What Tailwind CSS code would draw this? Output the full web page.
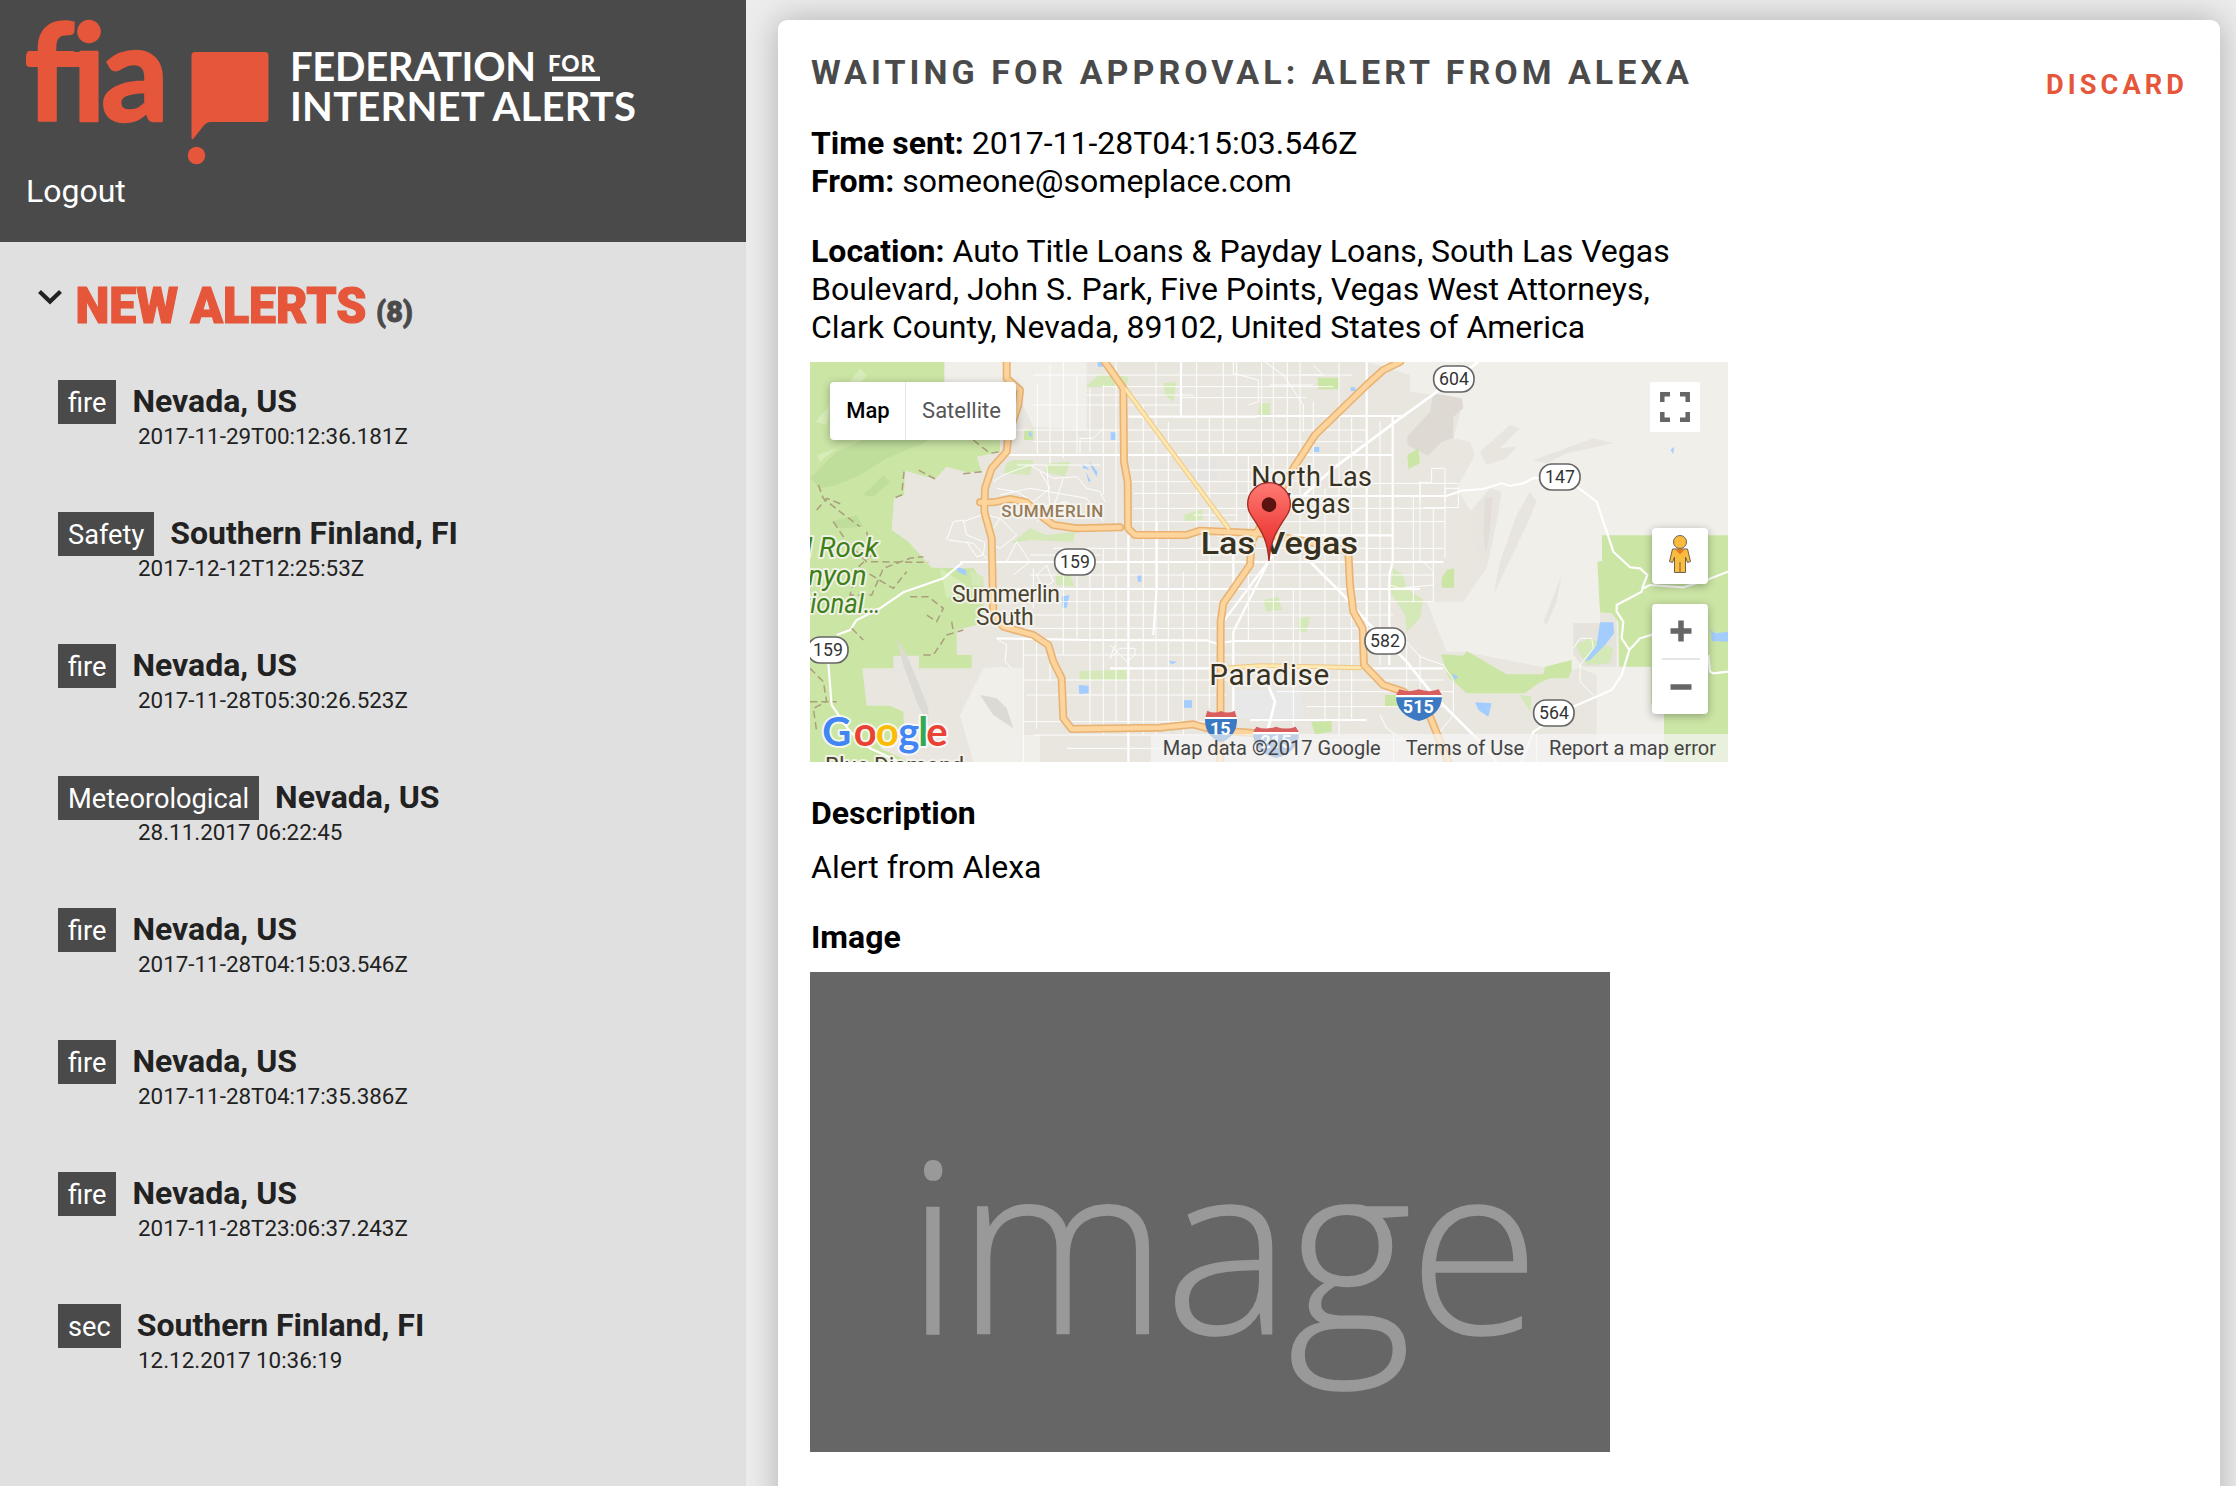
<!DOCTYPE html>
<html lang="en">
<head>
<meta charset="utf-8">
<title>Federation for Internet Alerts</title>
<script src="https://cdn.jsdelivr.net/npm/@tailwindcss/browser@4"></script>
</head>
<body class="flex h-[1486px] w-[2236px] overflow-hidden bg-[#ececec] font-[Roboto,sans-serif]">

<aside class="flex w-[746px] shrink-0 flex-col bg-[#e0e0e0] text-[#222]">
  <header class="h-[242px] bg-[#4a4a4a] text-white">
    <svg class="block h-[172px] w-[660px]" viewBox="0 0 660 172">
      <g fill="#e5563a">
        <text y="120.500" font-family="Lato" font-weight="700" font-size="134" stroke="#e5563a" stroke-width="2.500" stroke-linejoin="round"><tspan x="26">f</tspan><tspan x="72">i</tspan><tspan x="101" textLength="68" lengthAdjust="spacingAndGlyphs">a</tspan></text>
        <rect x="26" y="52" width="71" height="15" rx="4"/>
        <path d="M195 52H265Q268.500 52 268.500 55.500V118.500Q268.500 122 265 122H211Q206.500 122 203.500 126L193.500 138.500Q191.500 140 191.500 137.500V55.500Q191.500 52 195 52Z"/>
        <circle cx="196.500" cy="155.500" r="8.700"/>
      </g>
      <g fill="#fff" font-family="Lato" font-weight="700">
        <text x="290" y="80.500" font-size="40" textLength="246">FEDERATION</text>
        <text x="548" y="71.500" font-size="22.500" font-weight="900" textLength="47">FOR</text>
        <rect x="552" y="76.500" width="48" height="4.500"/>
        <text x="290" y="121" font-size="40" textLength="346">INTERNET ALERTS</text>
      </g>
    </svg>
    <a class="ml-[26px] block text-[32px] leading-[38px]">Logout</a>
  </header>

  <div class="flex h-[138px] pt-[36px] pl-[36px]">
    <svg class="h-[60px] w-[400px]" viewBox="36 278 400 60">
      <path d="M39.500 291.500L50 301.500L60.500 291.500" fill="none" stroke="#222" stroke-width="4.200"/>
      <text x="75.500" y="322.500" font-size="50.500" font-weight="900" fill="#e5563a" stroke="#e5563a" stroke-width="1.200" textLength="291" lengthAdjust="spacingAndGlyphs">NEW ALERTS</text>
      <text x="376" y="321.500" font-size="29" font-weight="900" fill="#4a4a4a" stroke="#4a4a4a" stroke-width=".8" textLength="37" lengthAdjust="spacingAndGlyphs">(8)</text>
    </svg>
  </div>

  <ul class="pl-[58px]">
    <li class="h-[132px]"><div class="flex h-[44px] items-start gap-4"><span class="h-[44px] bg-[#4a4a4a] px-[10px] text-[27.2px] leading-[46px] text-white">fire</span><b class="text-[32px] leading-[43px]">Nevada, US</b></div><div class="pl-[80px] text-[22.4px] leading-[25px]">2017-11-29T00:12:36.181Z</div></li>
    <li class="h-[132px]"><div class="flex h-[44px] items-start gap-4"><span class="h-[44px] bg-[#4a4a4a] px-[10px] text-[27.2px] leading-[46px] text-white">Safety</span><b class="text-[32px] leading-[43px]">Southern Finland, FI</b></div><div class="pl-[80px] text-[22.4px] leading-[25px]">2017-12-12T12:25:53Z</div></li>
    <li class="h-[132px]"><div class="flex h-[44px] items-start gap-4"><span class="h-[44px] bg-[#4a4a4a] px-[10px] text-[27.2px] leading-[46px] text-white">fire</span><b class="text-[32px] leading-[43px]">Nevada, US</b></div><div class="pl-[80px] text-[22.4px] leading-[25px]">2017-11-28T05:30:26.523Z</div></li>
    <li class="h-[132px]"><div class="flex h-[44px] items-start gap-4"><span class="h-[44px] bg-[#4a4a4a] px-[10px] text-[27.2px] leading-[46px] text-white">Meteorological</span><b class="text-[32px] leading-[43px]">Nevada, US</b></div><div class="pl-[80px] text-[22.4px] leading-[25px]">28.11.2017 06:22:45</div></li>
    <li class="h-[132px]"><div class="flex h-[44px] items-start gap-4"><span class="h-[44px] bg-[#4a4a4a] px-[10px] text-[27.2px] leading-[46px] text-white">fire</span><b class="text-[32px] leading-[43px]">Nevada, US</b></div><div class="pl-[80px] text-[22.4px] leading-[25px]">2017-11-28T04:15:03.546Z</div></li>
    <li class="h-[132px]"><div class="flex h-[44px] items-start gap-4"><span class="h-[44px] bg-[#4a4a4a] px-[10px] text-[27.2px] leading-[46px] text-white">fire</span><b class="text-[32px] leading-[43px]">Nevada, US</b></div><div class="pl-[80px] text-[22.4px] leading-[25px]">2017-11-28T04:17:35.386Z</div></li>
    <li class="h-[132px]"><div class="flex h-[44px] items-start gap-4"><span class="h-[44px] bg-[#4a4a4a] px-[10px] text-[27.2px] leading-[46px] text-white">fire</span><b class="text-[32px] leading-[43px]">Nevada, US</b></div><div class="pl-[80px] text-[22.4px] leading-[25px]">2017-11-28T23:06:37.243Z</div></li>
    <li class="h-[132px]"><div class="flex h-[44px] items-start gap-4"><span class="h-[44px] bg-[#4a4a4a] px-[10px] text-[27.2px] leading-[46px] text-white">sec</span><b class="text-[32px] leading-[43px]">Southern Finland, FI</b></div><div class="pl-[80px] text-[22.4px] leading-[25px]">12.12.2017 10:36:19</div></li>
  </ul>
</aside>

<main class="mt-5 mr-4 ml-8 h-[1500px] grow rounded-[9px] bg-white px-8 pt-8 text-[32px] leading-[38px] text-black shadow-[0_0_32px_rgba(0,0,0,0.26)]">
  <div class="flex h-[72px] justify-between pl-px">
    <h1 class="text-[34px] leading-10 font-bold tracking-[4.03px] text-[#4a4a4a]">WAITING FOR APPROVAL: ALERT FROM ALEXA</h1>
    <button class="mt-4 h-[34px] text-[27.2px] leading-[34px] font-bold tracking-[4.08px] text-[#e5563a]">DISCARD</button>
  </div>
  <div class="pl-px"><b>Time sent:</b> 2017-11-28T04:15:03.546Z</div>
  <div class="pl-px"><b>From:</b> someone@someplace.com</div>
  <div class="mt-8 w-[880px] pl-px"><b>Location:</b> Auto Title Loans &amp; Payday Loans, South Las Vegas Boulevard, John S. Park, Five Points, Vegas West Attorneys, Clark County, Nevada, 89102, United States of America</div>

  <div class="relative mt-4 h-[400px] w-[918px] overflow-hidden bg-[#e9e6e0]">
    <svg class="block h-[400px] w-[918px]" viewBox="30 21 2754 1200">
      <!-- terrain -->
      <path fill="#f0efea" d="M435 21H860V225L700 215L640 90L435 85ZM480 1080L550 940L600 935L668 940V1140H720V1221H520Z"/>
      <path fill="#f0efea" d="M1700 21H2784V1221H2390V960L2320 930V805H2450V780L2400 640V500L2400 920L2300 950L1990 890L1940 890L1880 740L1990 740L2060 640L2020 480L1970 400L2025 300L2010 260L1960 250L1990 140L1900 120L1830 110V60Z"/>
      <path fill="#ded9d2" d="M1900 115L1985 130L1990 160L1960 185V250L1925 260L1885 302L1822 270V245L1890 170Z"/>
      <path fill="#e8e5df" d="M2040 290L2130 210L2160 220L2100 280L2150 275L2120 310L2060 330ZM2200 315L2380 250L2440 265L2300 295L2240 325ZM2010 470L2070 400L2105 410L2090 500L2060 640L2030 600ZM2150 480L2190 410L2210 440L2180 510L2080 720L2100 620ZM2230 800L2285 660L2270 740L2240 810Z"/>
      <path fill="#e3ddd8" d="M2055 430L2078 425L2070 520L2058 600L2050 540Z"/>
      <path fill="#e6e2dc" d="M2320 805H2450V935H2350L2320 900Z"/>
      <path fill="#e5e4e2" d="M1150 310H1250V375H1180Z"/>
      <!-- parks -->
      <path fill="#cbe5a5" d="M30 21H432V85H600V290L530 305L545 350L500 352L440 335L405 372L315 347L312 420L282 430L275 525L325 560L395 638L520 640L550 680V770L530 810L470 825V900H515V940H357V902H280V940H187L200 1052H270L310 1070L312 1110L240 1180L330 1221H30Z"/>
      <path fill="#bfdd9b" d="M30 370L110 290L200 250L330 190L400 200L380 260L260 310L180 360L110 390L60 400ZM190 420L250 360L270 380L220 425ZM90 500L170 480L190 515L120 520Z"/>
      <path fill="#d7ecb9" d="M120 120L180 40L200 60L150 130ZM110 280L60 320L50 300ZM420 640L500 690L440 730ZM45 200L90 150L80 210Z"/>
      <path fill="#dcdad5" d="M290 850L320 900L345 960L385 1060V1110L350 1040L310 930ZM540 1020L590 1030L620 1060L640 1120L580 1080Z"/>
      <path fill="#cbe5a5" d="M2406 541H2784V1221H2592V1060L2553 1045V935H2457L2455 800L2435 775L2400 772L2392 620L2406 618ZM1923 898L1990 902L2000 888L2120 958H2230L2235 935L2315 915V945L2305 970H2250L2215 985L2175 1015H2000L1945 965ZM1925 670L1940 645L1962 640V698H1925ZM1755 1020H1795V1055H1755ZM1533 1100L1595 1098V1130L1545 1138ZM1553 68H1615V103H1555ZM1822 300L1855 280L1860 325L1825 342ZM672 228L700 220V255H672Z"/>
      <path fill="#d4e8b8" d="M860 92L900 58L985 65L980 92L860 97ZM1090 85L1130 80L1120 140L1095 120ZM1152 480L1208 462V495L1155 500ZM640 315H700L690 360L610 355L620 325ZM740 325L810 320L795 365L735 350ZM690 520L740 540L825 530L820 560L690 555L635 565L670 535ZM838 948L980 945V975H838ZM510 645L550 665V695L515 690ZM765 660L800 640L825 695L770 690ZM1390 735L1435 725L1445 765L1400 770ZM1495 790L1530 785L1520 830H1495ZM1780 640L1810 660L1820 700L1870 735L1860 790L1820 830L1815 780L1770 710ZM2325 870L2370 850L2440 880L2430 925L2360 930ZM1380 145H1410V180H1375ZM2160 1020L2195 1025L2190 1070Z"/>
      <path fill="#e8e8e8" d="M1300 1005H1500L1515 1085L1470 1090H1300Z"/>
      <!-- water -->
      <path fill="#a3ccff" d="M685 240L690 225L698 245ZM932 232H948V255H932ZM845 325L870 345L850 340ZM868 320L892 350L890 365L875 340ZM858 350L872 378L865 380ZM470 635L498 645L500 662L473 650ZM785 725L808 720L800 758H788ZM836 990L866 992V1015L838 1017ZM1150 1036H1176V1058H1152ZM1106 918L1132 920L1115 928ZM1012 662L1024 658V680H1014ZM1540 276H1558V291H1540ZM1652 97H1666V108H1652ZM893 21H910V35H893ZM2400 802H2440L2442 835L2415 870L2370 915L2355 918L2390 870ZM2733 825L2745 835L2784 830V860L2735 858ZM2025 1042L2075 1045L2065 1085L2035 1065ZM1955 955L1975 965L1965 975ZM2612 285L2622 275L2620 298Z"/>
      <!-- street grid -->
      <g fill="none" stroke="#fff" stroke-width="2.800">
        <path d="M700 60H1655M910 95H1600M860 120H1180M1410 90H1540M700 150H1143M1143 128H1520M640 225H1700M700 260H1690M650 330H900M985 345H1480M985 380H1450M1000 415H1400M1450 378H1560M1640 385H1975M1000 460H1935M985 500H1935M1180 480H1310M760 580H1930M690 600H900M690 660H1900M640 740H1900M680 780H1780M670 820H1750M670 900H1700M670 975H1930M680 1020H1280M1430 1010H1960M670 1100H1250M700 1140H1200M1520 1055H1940M800 1180H1380M1520 1155H1900"/>
        <path d="M712 90V300M750 30V330M790 21V310M831 60V300M870 100V290M910 90V420M948 21V620M1030 150V1140M1068 21V1140M1105 200V1130M1190 21V1110M1228 180V1060M1270 21V300M1310 21V500M1345 300V860M1385 21V540M1420 21V940M1462 21V460M1500 21V950M1540 140V450M1575 400V1100M1617 21V1150M1655 180V1100M1740 200V930M1840 420V740M1900 460V740M1860 380V620M1935 400V610M670 850V1221M710 860V1120M750 900V980M790 580V900M831 600V860M870 600V1120M910 580V1140M948 660V1100M700 640V760M1150 650V1140M1820 840V1000M1860 900V1100M1480 700V1200"/>
        <path d="M1300 21V55L1375 75V140L1345 150M1395 21L1450 60L1510 150V230M1540 30L1570 60H1500M910 220L880 250H840V295M580 380L610 360L690 330L760 370L830 365L860 400L900 410L915 440M590 400L650 410L700 440L750 400L720 350M740 330L750 460M790 370L760 460L710 500M600 420L690 400L860 430L910 500M700 460L800 440L850 480M560 480L600 490L650 540L600 580L560 560M600 490L580 520M620 620L650 560L690 620L640 660M440 555L460 500L490 495L500 540L550 560M490 500L545 480M445 555L520 565L560 610M500 560L530 605L550 600L555 560M740 630L710 660L730 700L760 680ZM590 850L620 870L615 920L635 940M930 870L980 920L1005 900V880L960 880L930 910L945 870M1870 620L1900 650V690L1800 700L1770 690M1820 860L1860 905L1930 930L1960 975V1080L1920 1130M1740 1080L1760 1120L1820 1160"/>
        <path d="M1895 382V340H1935V440M1895 382H1860V440M1870 458H1975V400H1935M2320 880L2340 850L2375 850L2380 880L2340 930L2340 980L2380 1020"/>
      </g>
      <g fill="none" stroke="#fff" stroke-width="6.500">
        <path d="M985 185H1370M1370 183H1815M620 300H1780M1470 423H1940L1985 407L2050 402L2105 385L2130 393L2170 385L2200 370L2260 365M480 621H1930M650 702H1860M590 850L860 855L1220 856L1250 866L1300 858H1690M930 940H1930M1250 541H1380H1780M985 540V1221M1143 21V185M1700 21V900M1778 185V620L1768 660V930M1300 1090V830L1435 560M1070 500V700L1060 840M1300 540V700M1270 800L1420 600M1350 1095H1700"/>
        <path stroke-width="8" d="M2035 21L1800 190L1600 340L1490 440M1520 610L1630 720L1700 800L1820 920L1900 1020L1990 1110L2050 1170L2090 1221M1400 980L1425 1040L1410 1100L1380 1200"/>
        <path d="M2330 395L2390 440L2420 530L2440 590L2490 637L2520 640L2542 660L2530 690L2525 710L2450 750V770L2470 800L2465 850L2488 885L2465 960L2435 1005L2320 1055L2200 1130L2165 1221M2530 700L2550 690L2650 697L2720 675L2784 650M2488 885L2520 850L2560 838M2725 900L2730 950L2740 955L2784 950M490 621L430 670L310 712L240 760L170 795L150 825L110 840M85 925L95 1050L150 1130L210 1180L300 1221"/>
      </g>
      <!-- trails -->
      <path fill="none" stroke="#ab9f7d" stroke-width="4.500" stroke-dasharray="22 12" d="M520 255L570 295L600 290M545 350L480 357M405 372L350 342M312 350L305 420L280 430M55 390L70 430L120 470L180 515M50 465L80 430L130 450M100 500L140 560L200 620L385 622M200 530L215 600L170 640L150 720L215 720L250 640L330 610L370 605M180 640L280 700L320 650M330 725L385 725L430 760L410 800L380 780M155 820L190 855M370 900L400 900L440 840L490 825M30 940L70 980L80 1040L40 1060L50 1130M30 1040H110M455 800L460 830"/>
      <!-- highways -->
      <g fill="none" stroke-linejoin="round" stroke-linecap="round">
        <g stroke="#e8b273">
          <path stroke-width="15" stroke="#ecc987" d="M975 100L1285 520M1270 940L1380 932L1680 938"/>
          <path stroke-width="24" d="M540 442H580L630 432L680 442L720 480L760 510L830 520L960 517M620 21V70L660 105L655 150L625 240L620 290L575 340L555 400L553 470L575 550L580 780L610 815L700 840L745 870L760 920L785 970L790 1090L815 1122L1080 1118L1180 1108L1240 1125L1370 1135M915 21L970 100L972 320L983 380L984 520L1005 540L1160 540L1200 527L1380 535L1470 550L1600 575L1645 590L1650 690L1660 770L1688 820L1692 930L1750 990L1810 1010L1880 1060L1945 1221M1800 21L1750 45L1700 90L1545 240L1480 340L1430 430L1355 560L1350 630L1270 745L1262 800L1261 1221"/>
        </g>
        <g stroke="#fdd49b">
          <path stroke-width="9" stroke="#ffe7b0" d="M975 100L1285 520M1270 940L1380 932L1680 938"/>
          <path stroke-width="14.500" d="M540 442H580L630 432L680 442L720 480L760 510L830 520L960 517M620 21V70L660 105L655 150L625 240L620 290L575 340L555 400L553 470L575 550L580 780L610 815L700 840L745 870L760 920L785 970L790 1090L815 1122L1080 1118L1180 1108L1240 1125L1370 1135M915 21L970 100L972 320L983 380L984 520L1005 540L1160 540L1200 527L1380 535L1470 550L1600 575L1645 590L1650 690L1660 770L1688 820L1692 930L1750 990L1810 1010L1880 1060L1945 1221M1800 21L1750 45L1700 90L1545 240L1480 340L1430 430L1355 560L1350 630L1270 745L1262 800L1261 1221"/>
        </g>
      </g>
      <!-- route shields -->
      <g fill="#fff" stroke="#666" stroke-width="5">
        <rect x="764" y="582" width="121" height="78" rx="37"/>
        <rect x="23" y="846" width="121" height="78" rx="37"/>
        <rect x="1901" y="33" width="121" height="78" rx="37"/>
        <rect x="2219" y="327" width="121" height="78" rx="37"/>
        <rect x="1695" y="819" width="121" height="78" rx="37"/>
        <rect x="2201" y="1035" width="121" height="78" rx="37"/>
      </g>
      <g fill="#333" font-size="53" text-anchor="middle">
        <text x="825" y="640">159</text><text x="84" y="904">159</text><text x="1962" y="91">604</text><text x="2280" y="385">147</text><text x="1755" y="877">582</text><text x="2262" y="1093">564</text>
      </g>
      <g text-anchor="middle" fill="#fff" font-weight="700" font-size="54">
        <path fill="#d95f5f" d="M1222 1067Q1242 1078 1263 1068Q1284 1078 1304 1067L1310 1087H1216Z"/>
        <path fill="#fff" d="M1215 1086H1311V1093H1215Z"/>
        <path fill="#3b7ac2" d="M1215 1092H1311Q1312 1144 1263 1162Q1214 1144 1215 1092Z"/>
        <text x="1261" y="1139">15</text>
        <path fill="#d95f5f" d="M1798 1003Q1826 1014 1857 1003Q1888 1014 1916 1003L1926 1021H1788Z"/>
        <path fill="#fff" d="M1788 1020H1926V1028H1788Z"/>
        <path fill="#3b7ac2" d="M1788 1027H1926Q1922 1082 1857 1098Q1792 1082 1788 1027Z"/>
        <text x="1855" y="1074">515</text>
        <path fill="#d95f5f" d="M1369 1115Q1397 1126 1428 1115Q1459 1126 1487 1115L1497 1132H1359Z"/>
        <path fill="#fff" d="M1359 1131H1497V1139H1359Z"/>
        <path fill="#3b7ac2" d="M1359 1138H1497Q1493 1193 1428 1209Q1363 1193 1359 1138Z"/>
        <text x="1428" y="1180">215</text>
      </g>
      <!-- place names -->
      <g paint-order="stroke" stroke="#f7f5f1" stroke-opacity=".85" stroke-width="12" stroke-linejoin="round" fill="#37321f">
        <text x="604" y="486" font-size="51" font-weight="500" fill="#947b58" textLength="306">SUMMERLIN</text>
        <text x="456" y="740" font-size="69" textLength="324" fill="#4a442f">Summerlin</text>
        <text x="528" y="810" font-size="69" textLength="173" fill="#4a442f">South</text>
        <text x="1354" y="392" font-size="81" textLength="362">North Las</text>
        <text x="1421" y="475" font-size="81" textLength="230">Vegas</text>
        <text x="1202" y="597" font-size="96" font-weight="500" textLength="472" lengthAdjust="spacingAndGlyphs">Las Vegas</text>
        <text x="1228" y="990" font-size="89" textLength="360">Paradise</text>
        <g font-style="italic" fill="#3f7f18" font-size="83">
          <text x="-9" y="605" textLength="244" lengthAdjust="spacingAndGlyphs">d Rock</text><text x="-21" y="690" textLength="221" lengthAdjust="spacingAndGlyphs">anyon</text><text x="6" y="773" textLength="236" lengthAdjust="spacingAndGlyphs">tional…</text>
        </g>
        <text x="75" y="1258" font-size="69" textLength="418" fill="#4a442f">Blue Diamond</text>
      </g>
      <!-- marker -->
      <defs><linearGradient id="pin" x1="0" y1="0" x2="0" y2="1"><stop offset="0" stop-color="#ff7b74"/><stop offset=".6" stop-color="#f0443f"/><stop offset="1" stop-color="#d8322d"/></linearGradient></defs>
      <path fill="url(#pin)" stroke="#a52b27" stroke-width="4" d="M1407 618C1403 560 1388 535 1366 500C1352 480 1343 467 1343 447A64 64 0 0 1 1471 447C1471 467 1462 480 1448 500C1426 535 1411 560 1407 618Z"/>
      <circle cx="1407" cy="449" r="22" fill="#5a1311"/>
      <text y="1173" font-family="Lato" font-weight="700" font-size="120" paint-order="stroke" stroke="#fff" stroke-opacity=".75" stroke-width="12" stroke-linejoin="round"><tspan x="67" fill="#4285f4">G</tspan><tspan x="161" fill="#ea4335">o</tspan><tspan x="227" fill="#fbbc05">o</tspan><tspan x="295" fill="#4285f4">g</tspan><tspan x="355" fill="#34a853">l</tspan><tspan x="379" fill="#ea4335">e</tspan></text>
    </svg>

    <div class="absolute top-5 left-5 flex h-[58px] w-[186px] overflow-hidden rounded-[4px] bg-white text-[22px] leading-[57px] shadow-[0_2px_8px_rgba(0,0,0,0.3)]">
      <div class="w-[76px] border-r border-[#e6e6e6] pl-px text-center font-medium">Map</div>
      <div class="w-[110px] pl-px text-center text-[#565656]">Satellite</div>
    </div>
    <div class="absolute top-5 right-7 flex h-[50px] w-[50px] items-center justify-center rounded-[2px] bg-white">
      <svg class="h-[30px] w-[30px]" viewBox="0 0 30 30" fill="none" stroke="#666" stroke-width="4.500"><path d="M2.300 10V2.300H10M20 2.300H27.700V10M27.700 20V27.700H20M10 27.700H2.300V20"/></svg>
    </div>
    <div class="absolute top-[166px] right-5 flex h-14 w-14 items-center justify-center rounded-[4px] bg-white shadow-[0_2px_8px_rgba(0,0,0,0.3)]">
      <svg class="mb-1 h-[40px] w-[24px]" viewBox="0 0 24 40"><path d="M4.500 15H19.500L22.500 27.500L19.500 28.500L17.500 23V38.500H6.500V23L4.500 28.500L1.500 27.500Z" fill="#fbbc3d" stroke="#6b6250"/><path d="M7.500 15.500H16.500L12 20.500Z" fill="#e8761f"/><path d="M12 28V38" stroke="#6b6250"/><circle cx="12" cy="8" r="6.500" fill="#fbbc3d" stroke="#6b6250"/></svg>
    </div>
    <div class="absolute top-[242px] right-5 h-[110px] w-14 rounded-[4px] bg-white shadow-[0_2px_8px_rgba(0,0,0,0.3)]">
      <svg class="h-[110px] w-14" viewBox="0 0 56 110" fill="none" stroke="#666" stroke-width="5.500"><path d="M18.500 27H39.500M29 16.500V37.500M18.500 83H39.500"/><path d="M10 55H48" stroke="#e6e6e6" stroke-width="2"/></svg>
    </div>
    <div class="absolute right-0 bottom-0 flex h-7 items-center bg-[#f5f5f5]/70 text-[20px] leading-7 text-[#444]">
      <span class="px-3">Map data ©2017 Google</span><span class="border-l border-white/60 px-3">Terms of Use</span><span class="border-l border-white/60 px-3">Report a map error</span>
    </div>
  </div>

  <div class="mt-8 pl-px"><b>Description</b></div>
  <div class="mt-4 pl-px">Alert from Alexa</div>
  <div class="mt-8 pl-px"><b>Image</b></div>
  <svg class="mt-4 block h-[480px] w-[800px]" viewBox="0 0 800 480">
    <rect width="800" height="480" fill="#666"/>
    <text x="96" y="362" font-family="Open Sans" font-weight="300" font-size="239" fill="#999" stroke="#999" stroke-width="1.500" textLength="634">image</text>
  </svg>
</main>
</body>
</html>
